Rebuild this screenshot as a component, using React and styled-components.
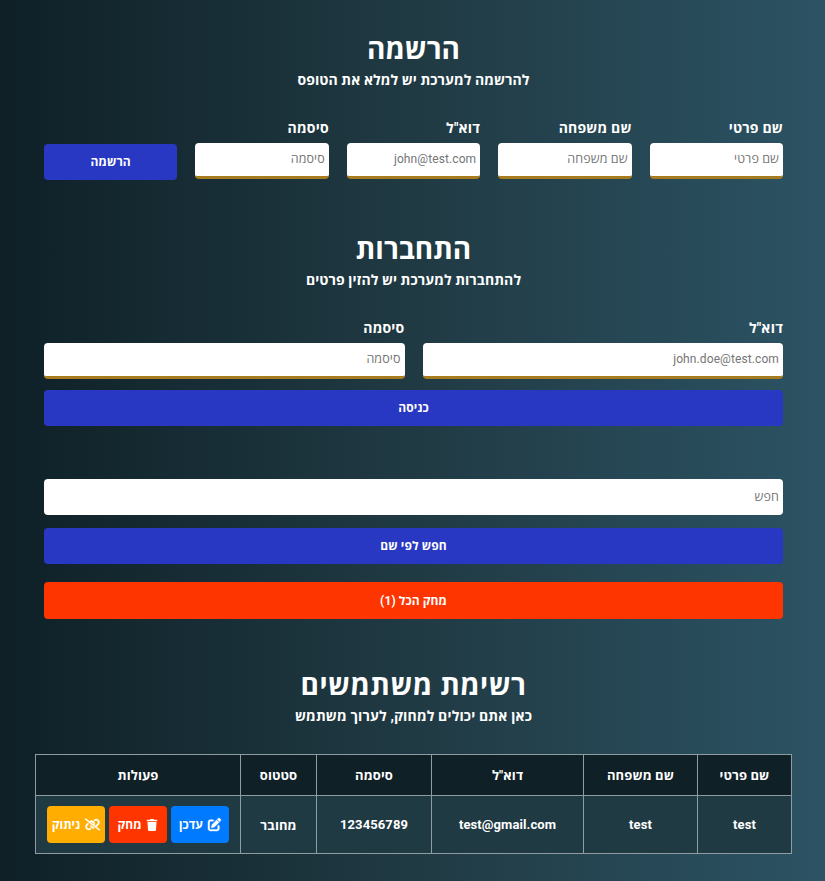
import React from "react";
import styled, { createGlobalStyle } from "styled-components";
import { FaTrash } from "react-icons/fa";
import { FaPenToSquare, FaLinkSlash } from "react-icons/fa6";

const Global = createGlobalStyle`
  * { box-sizing: border-box; }
  body {
    margin: 0;
    min-height: 881px;
    background: linear-gradient(to right, #0f2027, #203a43, #2c5364);
    color: #fff;
    font-family: Roboto, "Open Sans", "Noto Sans", sans-serif;
  }
`;

const Page = styled.main`
  direction: rtl;
  width: 757px;
  height: 881px;
  margin: 0 33px 0 35px;
  padding-top: 28px;
`;

const Section = styled.section`
  height: ${(p) => p.$height}px;
  padding: 0 9px;
`;

const Heading = styled.h1`
  margin: 0;
  padding-top: 2px;
  height: 40px;
  text-align: center;
  font-size: 28px;
  line-height: 40px;
  font-weight: 700;
  letter-spacing: ${(p) => p.$track || 0}px;
`;

const Lead = styled.p`
  margin: 0 0 26px;
  text-align: center;
  font-size: 14px;
  line-height: 24px;
  font-weight: 700;
  letter-spacing: ${(p) => p.$track || 0.07}px;
`;

const Fields = styled.form`
  display: grid;
  grid-template-columns: repeat(${(p) => p.$columns}, minmax(0, 1fr));
  column-gap: 18px;
  align-items: end;
`;

const Label = styled.label`
  display: block;
  font-size: 14px;
  line-height: 20px;
  font-weight: 700;
  letter-spacing: 0.2px;
`;

const Input = styled.input`
  display: block;
  width: 100%;
  height: 36px;
  margin-top: ${(p) => (p.$plain ? 0 : 5)}px;
  padding: 0 4px ${(p) => (p.$plain || p.$latin ? 1 : 2)}px;
  border: 0;
  border-bottom: ${(p) => (p.$plain ? "0" : "3px solid #a67c1e")};
  border-radius: 4px;
  background: #fff;
  font: ${(p) => (p.$latin ? "400 12px" : "500 12.5px")}/18px Roboto, "Open Sans", sans-serif;
  letter-spacing: 0.1px;
  &::placeholder { color: #757575; opacity: 1; }
`;

const Button = styled.button`
  display: block;
  width: 100%;
  height: ${(p) => p.$height || 36}px;
  margin-top: ${(p) => p.$gap || 0}px;
  margin-bottom: ${(p) => p.$drop || 0}px;
  padding: 0;
  border: 0;
  border-radius: 4px;
  background: ${(p) => p.$color || "#2938c2"};
  color: #fff;
  font: 700 12px/18px Roboto, "Open Sans", sans-serif;
  letter-spacing: 0.1px;
`;

const Table = styled.table`
  width: 757px;
  border-collapse: collapse;
  table-layout: fixed;
  text-align: center;
  font-size: 13px;
  background: #203a43;
`;

const Cell = styled.td`
  height: ${(p) => (p.as === "th" ? 41 : 58)}px;
  padding: 0 0 ${(p) => (p.as === "th" ? 1 : 0)}px;
  border: 1px solid #8f9ca1;
  font-weight: 700;
  letter-spacing: 0.1px;
  background: ${(p) => (p.as === "th" ? "#0f2027" : "#203a43")};
`;

const Actions = styled.div`
  display: flex;
  justify-content: center;
  gap: 4px;
`;

const Action = styled.button`
  display: flex;
  align-items: center;
  justify-content: center;
  gap: 5px;
  width: 58px;
  height: 37px;
  padding: 0;
  border: 0;
  border-radius: 4px;
  background: ${(p) => p.$color};
  color: #fff;
  white-space: nowrap;
  font: 700 12px/18px Roboto, "Open Sans", sans-serif;

  svg {
    flex: none;
    overflow: visible;
    stroke: currentColor;
    stroke-width: ${(p) => p.$stroke || 0}px;
  }
`;

const Field = ({ label, hint }) => (
  <Label>
    {label}
    <Input placeholder={hint || label} $latin={Boolean(hint)} />
  </Label>
);

const columns = [
  ["שם פרטי", "test", 94],
  ["שם משפחה", "test", 114],
  ['דוא"ל', "test@gmail.com", 152],
  ["סיסמה", "123456789", 115],
  ["סטטוס", "מחובר", 76],
  ["פעולות", null, 205],
];

export default function App() {
  return (
    <>
      <Global />
      <Page>
        <Section $height={200}>
          <Heading>הרשמה</Heading>
          <Lead>להרשמה למערכת יש למלא את הטופס</Lead>
          <Fields $columns={5}>
            <Field label="שם פרטי" />
            <Field label="שם משפחה" />
            <Field label={'דוא"ל'} hint="john@test.com" />
            <Field label="סיסמה" />
            <Button type="button" $drop={-1}>הרשמה</Button>
          </Fields>
        </Section>
        <Section $height={251}>
          <Heading>התחברות</Heading>
          <Lead>להתחברות למערכת יש להזין פרטים</Lead>
          <Fields $columns={2}>
            <Field label={'דוא"ל'} hint="john.doe@test.com" />
            <Field label="סיסמה" />
          </Fields>
          <Button $gap={11}>כניסה</Button>
        </Section>
        <Section $height={185}>
          <Input $plain placeholder="חפש" />
          <Button $gap={13}>חפש לפי שם</Button>
          <Button $gap={18} $height={37} $color="#ff3500">מחק הכל (1)</Button>
        </Section>
        <Heading $track={0.5}>רשימת משתמשים</Heading>
        <Lead $track={0.15}>כאן אתם יכולים למחוק, לערוך משתמש</Lead>
        <Table>
          <colgroup>
            {columns.map(([title, , width]) => <col key={title} width={width} />)}
          </colgroup>
          <thead>
            <tr>{columns.map(([title]) => <Cell as="th" key={title}>{title}</Cell>)}</tr>
          </thead>
          <tbody>
            <tr>
              {columns.map(([title, value]) => (
                <Cell key={title}>
                  {value || (
                    <Actions>
                      <Action $color="#007bff" $stroke={16}><FaPenToSquare size={13} />עדכן</Action>
                      <Action $color="#ff3500"><FaTrash size={12} />מחק</Action>
                      <Action $color="#ffad00" $stroke={16}><FaLinkSlash size={15} />ניתוק</Action>
                    </Actions>
                  )}
                </Cell>
              ))}
            </tr>
          </tbody>
        </Table>
      </Page>
    </>
  );
}
